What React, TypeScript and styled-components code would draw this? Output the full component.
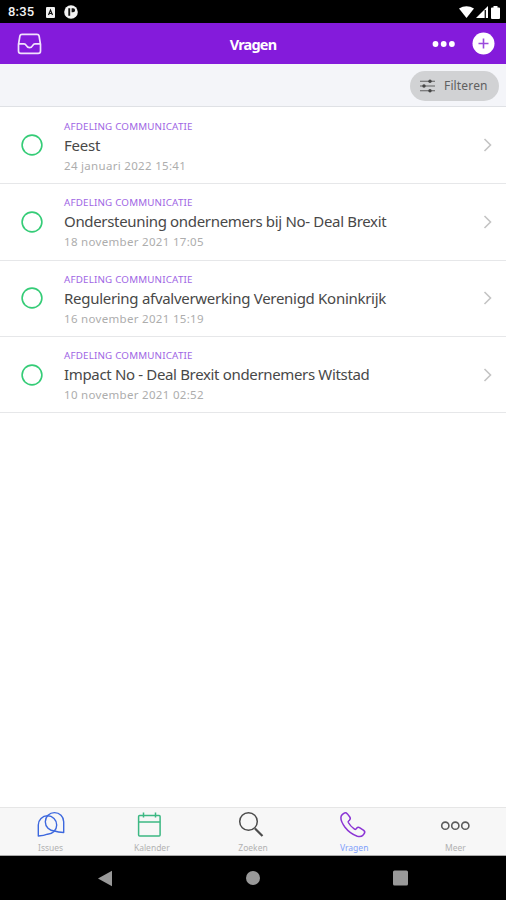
import React from 'react';
import styled, { createGlobalStyle } from 'styled-components';

const GlobalStyle = createGlobalStyle`
  * { box-sizing: border-box; }
  body { margin: 0; background: #fff; font-family: 'Noto Sans', 'Open Sans', sans-serif; }
  svg { display: block; flex: none; }
`;

const Screen = styled.div`
  width: 506px;
  height: 900px;
  display: flex;
  flex-direction: column;
  background: #fff;
  overflow: hidden;
`;

const StatusBar = styled.div`
  height: 23px;
  flex: none;
  background: #000;
  color: #f4f4f4;
  display: flex;
  align-items: center;
  padding: 1px 6px 0 8px;
`;

const Clock = styled.span`
  width: 38px;
  font: 500 13px/16px Roboto, sans-serif;
  letter-spacing: 0.2px;
`;

const StatusIcons = styled.div<{ $end?: boolean }>`
  display: flex;
  align-items: center;
  gap: ${(p) => (p.$end ? 2 : 9)}px;
  margin-left: ${(p) => (p.$end ? 'auto' : '0')};
`;

const Header = styled.header`
  height: 41px;
  flex: none;
  background: #841bdb;
  color: #fff;
  display: grid;
  grid-template-columns: 1fr auto 1fr;
  align-items: center;
  padding: 0 11px 0 17px;
`;

const Title = styled.h1`
  margin: 0 0 0 -6px;
  font-size: 14.5px;
  line-height: 20px;
  font-weight: 700;
  letter-spacing: -0.8px;
`;

const Actions = styled.div`
  display: flex;
  align-items: center;
  justify-content: flex-end;
  gap: 17px;
`;

const Toolbar = styled.div`
  height: 43px;
  flex: none;
  display: flex;
  align-items: center;
  justify-content: flex-end;
  padding: 2px 7px 0 0;
  background: #f4f5f9;
  border-bottom: 1px solid #dfe1e5;
`;

const FilterButton = styled.button`
  width: 89px;
  height: 30px;
  border: 0;
  border-radius: 15px;
  background: #d1d2d4;
  color: #606060;
  display: flex;
  align-items: center;
  gap: 8px;
  padding: 0 0 0 9px;
  font: 400 12px/16px 'Noto Sans', sans-serif;
  letter-spacing: 0.15px;
`;

const List = styled.ul`
  flex: 1;
  margin: 0;
  padding: 0.8px 0 0;
  list-style: none;
`;

const Row = styled.li`
  height: 76.4px;
  display: flex;
  align-items: center;
  gap: 21px;
  padding: 0 13px 0 21px;
  border-bottom: 1px solid #e6e7e9;
`;

const RowText = styled.div`
  flex: 1;
  display: flex;
  flex-direction: column;
  padding-top: 3px;
  white-space: nowrap;
`;

const Department = styled.span`
  font-size: 9.8px;
  line-height: 16px;
  letter-spacing: 0.18px;
  color: #a066e4;
`;

const Subject = styled.span<{ $tracking: number }>`
  font-size: 15px;
  line-height: 21px;
  letter-spacing: ${(p) => p.$tracking}px;
  color: #484848;
`;

const Timestamp = styled.span`
  font-size: 11.5px;
  line-height: 19px;
  letter-spacing: 0.31px;
  color: #adadad;
`;

const TabBar = styled.nav`
  height: 49px;
  flex: none;
  display: grid;
  grid-template-columns: repeat(5, 1fr);
  background: #f7f7f7;
  border-top: 1px solid #e6e6e6;
  border-bottom: 1px solid #aaa;
`;

const Tab = styled.div<{ $active?: boolean }>`
  display: flex;
  flex-direction: column;
  align-items: center;
  padding-top: 3px;
  gap: 2px;
  font-size: 8.5px;
  line-height: 13px;
  letter-spacing: 0;
  color: ${(p) => (p.$active ? '#7fa0fb' : '#b2b2b2')};
`;

const SystemNav = styled.div`
  height: 44px;
  flex: none;
  background: #000;
  display: flex;
  align-items: center;
  justify-content: center;
  gap: 132px;
`;

const LetterBadge = () => (
  <svg width="9" height="11" viewBox="0 0 9 11">
    <rect width="9" height="11" rx="1" fill="#f2f2f2" />
    <path d="M2.5 8 4.5 3 6.5 8M3.2 6.5h2.6" stroke="#111" strokeWidth="1.2" fill="none" />
  </svg>
);

const RoundBadge = () => (
  <svg width="14" height="14" viewBox="0 0 14 14">
    <circle cx="7" cy="7" r="6.8" fill="#f4f4f4" />
    <path d="M4.3 3.2h1.9v7.6H4.3zM7.6 3.2h1.5a2 2 0 0 1 0 4H7.6z" fill="#151515" />
  </svg>
);

const Wifi = () => (
  <svg width="15" height="12" viewBox="0 0 15 12">
    <path d="M0 2.6Q7.5-2.3 15 2.6L7.5 12Z" fill="#fff" />
  </svg>
);

const Signal = () => (
  <svg width="13" height="12" viewBox="0 0 13 12">
    <path d="M0 12 12 0v12Z" fill="#fff" />
    <path d="M9.3 4v8" stroke="#222" strokeWidth="1.4" />
  </svg>
);

const Battery = () => (
  <svg width="9" height="13" viewBox="0 0 9 13">
    <path d="M2.5 0h4v1.5H8q1 0 1 1V12q0 1-1 1H1q-1 0-1-1V2.5q0-1 1-1h1.5Z" fill="#fff" />
  </svg>
);

const Inbox = () => (
  <svg width="25" height="22" viewBox="0 0 25 22" fill="none" stroke="#f1e2fd" strokeWidth="1.7" strokeLinejoin="round">
    <path d="M5 1.3h15q1.8 0 2.1 1.7L23.500 11.500V18q0 2.400-2.400 2.400H3.900Q1.500 20.400 1.500 18v-6.500L2.900 3Q3.200 1.300 5 1.300Z" />
    <path d="M1.500 10.800H7q1.400 0 2.200 1.600 1.200 2.300 3.300 2.300t3.300-2.300q.8-1.600 2.200-1.600h5.500" />
  </svg>
);

const Dots = () => (
  <svg width="24" height="8" viewBox="0 0 24 8" fill="#fff">
    <circle cx="4.500" cy="4" r="2.900" />
    <circle cx="12.700" cy="4" r="2.900" />
    <circle cx="20.900" cy="4" r="2.900" />
  </svg>
);

const Add = () => (
  <svg width="23" height="23" viewBox="0 0 23 23">
    <circle cx="11.500" cy="11.500" r="11" fill="#fff" />
    <path d="M11.500 6.500v10M6.500 11.500h10" stroke="#9a4adc" strokeWidth="1.600" />
  </svg>
);

const Sliders = () => (
  <svg width="17" height="14" viewBox="0 0 17 14">
    <path d="M1 2.200h15M1 7h15M1 11.800h15" stroke="#606060" strokeWidth="1.100" />
    <g fill="#444">
      <circle cx="11" cy="2.200" r="1.700" />
      <circle cx="5" cy="7" r="1.700" />
      <circle cx="11" cy="11.800" r="1.700" />
    </g>
  </svg>
);

const Marker = () => (
  <svg width="22" height="22" viewBox="0 0 22 22" fill="none" stroke="#35cc77" strokeWidth="1.600">
    <circle cx="11" cy="11" r="9.900" />
  </svg>
);

const Chevron = () => (
  <svg width="11" height="14" viewBox="0 0 11 14" fill="none" stroke="#c4c4c4" strokeWidth="1.600">
    <path d="m2.500 1 6 6-6 6" />
  </svg>
);

const Chats = () => (
  <svg width="30" height="28" viewBox="0 0 30 28" fill="none" stroke="#3d68de" strokeWidth="1.400" strokeLinejoin="round">
    <path d="M2.300 25V14A9.200 9.200 0 1 1 11.500 23.200Q8 24.800 2.300 25Z" />
    <path d="M27.700 21.500V10.800A9.200 9.200 0 1 0 18.500 20Q22 21.400 27.700 21.500Z" />
  </svg>
);

const Calendar = () => (
  <svg width="30" height="28" viewBox="0 0 30 28" fill="none" stroke="#3cb883" strokeWidth="1.500">
    <rect x="1.600" y="4.500" width="21.500" height="20.500" rx="1" />
    <path d="M1.600 11h21.500" />
    <path d="M6.500 1.500v5M18.500 1.500v5" />
  </svg>
);

const Search = () => (
  <svg width="30" height="28" viewBox="0 0 30 28" fill="none" stroke="#4c4c4c">
    <circle cx="10.500" cy="10.500" r="8.800" strokeWidth="1.500" />
    <path d="m17 17.500 7.500 7.500" strokeWidth="2.200" />
  </svg>
);

const Phone = () => (
  <svg width="30" height="28" viewBox="0 0 30 28" fill="none" stroke="#8b34d4" strokeWidth="1.500" strokeLinejoin="round">
    <path d="M3.200 3.600 4.800 2.300Q6.800 1 8.400 2.900L10.800 6Q12 8 10.300 9.300Q8.700 10.200 9.300 11.500Q11.200 15 15.500 18.200Q16.700 18.800 17.600 17.300Q19 15.700 20.900 16.800L24.700 19.400Q26.600 20.900 25.100 22.800L23.800 24.400Q21.800 26.300 18.300 25.200Q11 22.700 6 16.200Q1.700 10.300 1.900 6.600Q2 4.700 3.200 3.600Z" />
  </svg>
);

const More = () => (
  <svg width="30" height="28" viewBox="0 0 30 28" fill="none" stroke="#5c5c5c" strokeWidth="1.600">
    <circle cx="5.300" cy="14.700" r="3.600" />
    <circle cx="15.300" cy="14.700" r="3.600" />
    <circle cx="25.300" cy="14.700" r="3.600" />
  </svg>
);

const questions = [
  { subject: 'Feest', date: '24 januari 2022 15:41', tracking: -0.2 },
  { subject: 'Ondersteuning ondernemers bij No- Deal Brexit', date: '18 november 2021 17:05', tracking: -0.33 },
  { subject: 'Regulering afvalverwerking Verenigd Koninkrijk', date: '16 november 2021 15:19', tracking: -0.29 },
  { subject: 'Impact No - Deal Brexit ondernemers Witstad', date: '10 november 2021 02:52', tracking: -0.34 },
];

const tabs = [
  { label: 'Issues', icon: <Chats /> },
  { label: 'Kalender', icon: <Calendar /> },
  { label: 'Zoeken', icon: <Search /> },
  { label: 'Vragen', icon: <Phone />, active: true },
  { label: 'Meer', icon: <More /> },
];

export default function App() {
  return (
    <Screen>
      <GlobalStyle />
      <StatusBar>
        <Clock>8:35</Clock>
        <StatusIcons>
          <LetterBadge />
          <RoundBadge />
        </StatusIcons>
        <StatusIcons $end>
          <Wifi />
          <Signal />
          <Battery />
        </StatusIcons>
      </StatusBar>
      <Header>
        <Inbox />
        <Title>Vragen</Title>
        <Actions>
          <Dots />
          <Add />
        </Actions>
      </Header>
      <Toolbar>
        <FilterButton>
          <Sliders />
          Filteren
        </FilterButton>
      </Toolbar>
      <List>
        {questions.map((q) => (
          <Row key={q.subject}>
            <Marker />
            <RowText>
              <Department>AFDELING COMMUNICATIE</Department>
              <Subject $tracking={q.tracking}>{q.subject}</Subject>
              <Timestamp>{q.date}</Timestamp>
            </RowText>
            <Chevron />
          </Row>
        ))}
      </List>
      <TabBar>
        {tabs.map((t) => (
          <Tab key={t.label} $active={t.active}>
            {t.icon}
            {t.label}
          </Tab>
        ))}
      </TabBar>
      <SystemNav>
        <svg width="15" height="17" viewBox="0 0 15 17">
          <path d="M14 .8v15.400L0 8.500Z" fill="#999" />
        </svg>
        <svg width="16" height="16" viewBox="0 0 16 16">
          <circle cx="8" cy="8" r="7" fill="#999" />
        </svg>
        <svg width="16" height="16" viewBox="0 0 16 16">
          <rect x="0" y=".5" width="15" height="15" rx="1.500" fill="#999" />
        </svg>
      </SystemNav>
    </Screen>
  );
}
